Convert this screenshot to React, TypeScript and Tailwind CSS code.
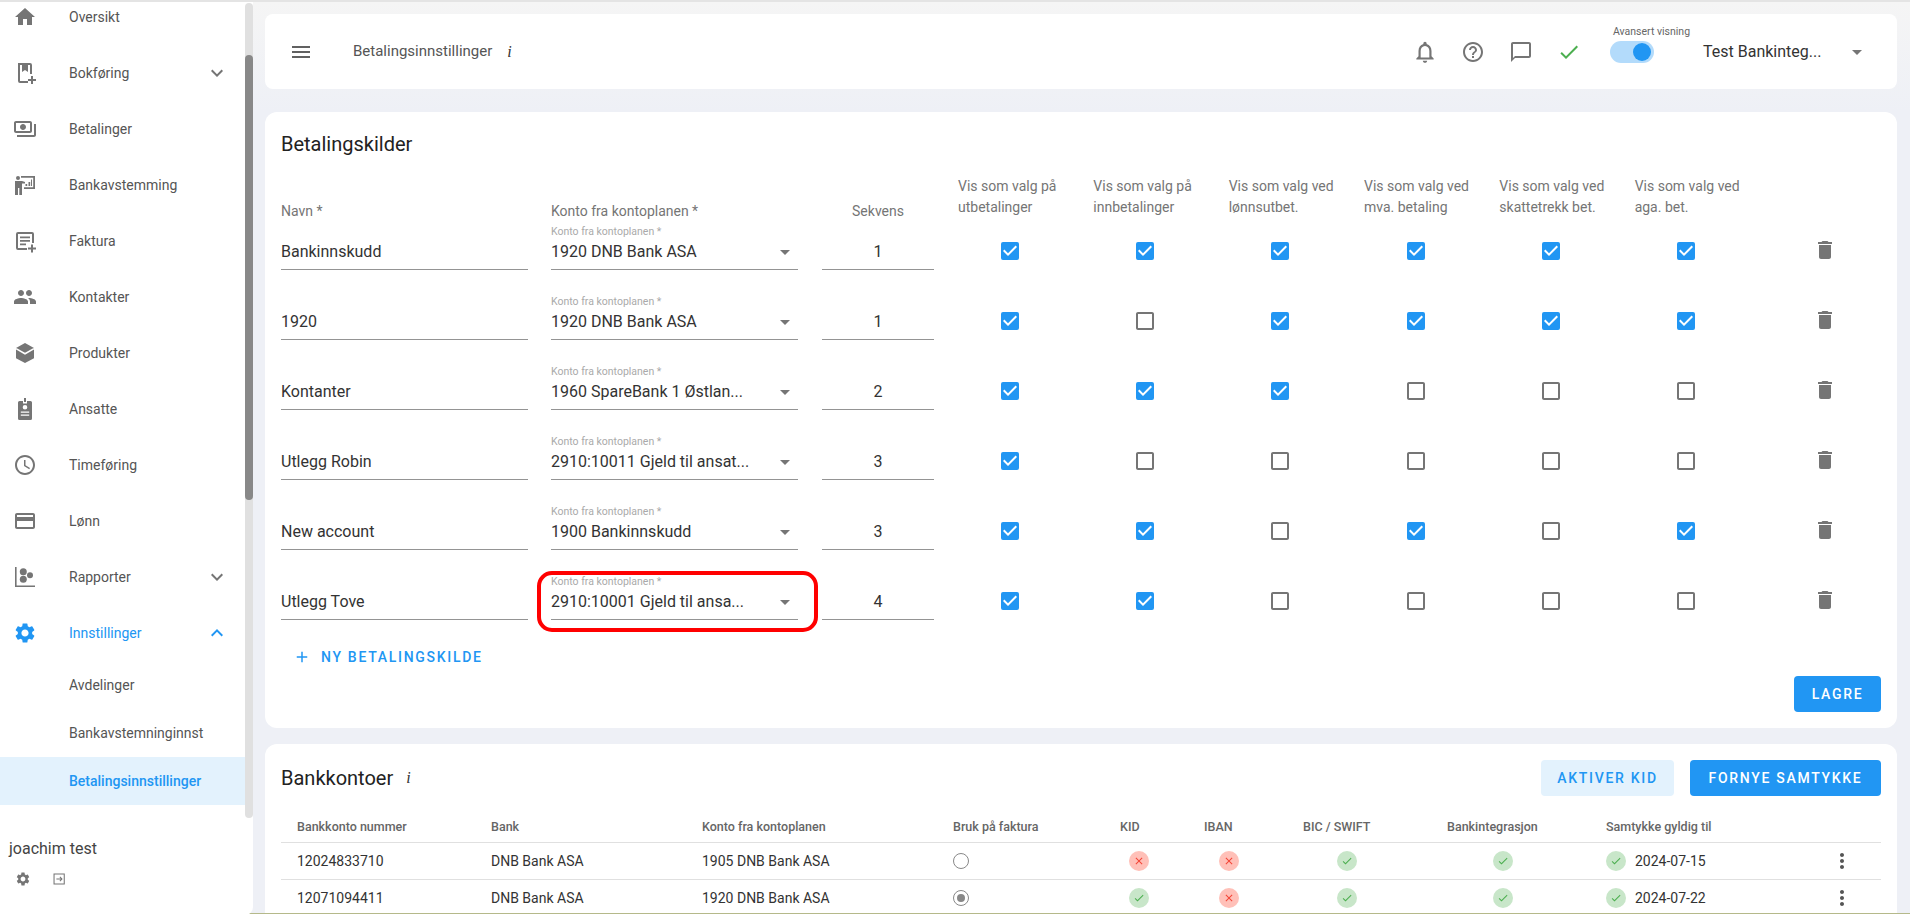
import { MdAdd, MdAccessTime, MdArrowDropDown, MdCheck, MdCheckBox, MdCheckBoxOutlineBlank, MdChatBubbleOutline, MdClose, MdCreditCard, MdDelete, MdExpandLess, MdExpandMore, MdHelpOutline, MdHome, MdMenu, MdMoreVert, MdOutlineNotifications, MdOutlinePayments, MdPeople, MdSettings } from "react-icons/md"
import type { ComponentType, ReactNode } from "react"

const font = "font-['Roboto','Liberation_Sans',sans-serif]"

function BookAddIcon({ className }: { className?: string }) {
  return (
    <svg viewBox="0 0 24 24" className={className} fill="currentColor">
      <path d="M5 2h12a2 2 0 0 1 2 2v9h-2V4h-2v7l-3-2-3 2V4H7v16h8v2H7a2 2 0 0 1-2-2z" />
      <path d="M18 15h2v3h3v2h-3v3h-2v-3h-3v-2h3z" />
    </svg>
  )
}

function InvoiceAddIcon({ className }: { className?: string }) {
  return (
    <svg viewBox="0 0 24 24" className={className} fill="currentColor">
      <path d="M5 3h14a2 2 0 0 1 2 2v9h-2V5H5v14h9v2H5a2 2 0 0 1-2-2V5a2 2 0 0 1 2-2z" />
      <path d="M7 7.500h10v1.800H7zM7 11h10v1.800H7zM7 14.500h6v1.800H7z" />
      <path d="M18 15.500h2v3h3v2h-3v3h-2v-3h-3v-2h3z" />
    </svg>
  )
}

function TrainingIcon({ className }: { className?: string }) {
  return (
    <svg viewBox="0 0 24 24" className={className} fill="currentColor">
      <circle cx="5" cy="5" r="2" />
      <path d="M2 8h7l3 1v1.600H9V22H6.300v-7H5v7H2z" />
      <path d="M8 3h14v13H11v-1.700h9.200V4.700H8z" />
      <path d="M12.500 11h1.700v2h-1.700zM15.500 9h1.700v4h-1.700zM18 6.500h1v6.500h-1z" />
    </svg>
  )
}

function BoxIcon({ className }: { className?: string }) {
  return (
    <svg viewBox="0 0 24 24" className={className}>
      <path fill="currentColor" d="M12 2 3 7v10.200l9 4.800 9-4.800V7z" />
      <path fill="none" stroke="#fff" strokeWidth="1.600" d="M3 7.600 12 12.800 21 7.600" />
    </svg>
  )
}

function BadgeIcon({ className }: { className?: string }) {
  return (
    <svg viewBox="0 0 24 24" className={className} fill="currentColor">
      <path fillRule="evenodd" d="M11 1h2v4h-2zM6.500 4H10v2.500h4V4h3.500A1.500 1.500 0 0 1 19 5.500v16a1.500 1.500 0 0 1-1.500 1.500h-11A1.500 1.500 0 0 1 5 21.500v-16A1.500 1.500 0 0 1 6.500 4zM12 8a2.300 2.300 0 1 0 0 4.600A2.300 2.300 0 0 0 12 8zM7.800 14.500v1.300h8.400v-1.300zM7.800 17.500v1.300h8.400v-1.300z" />
    </svg>
  )
}

function ReportIcon({ className }: { className?: string }) {
  return (
    <svg viewBox="0 0 24 24" className={className} fill="currentColor">
      <path d="M2 2h1.600v18.400H22V22H2z" />
      <circle cx="10.300" cy="6.700" r="3.500" />
      <circle cx="10.300" cy="14.300" r="3.500" />
      <circle cx="17" cy="10.300" r="3" />
    </svg>
  )
}

function LogoutIcon({ className }: { className?: string }) {
  return (
    <svg viewBox="0 0 24 24" className={className} fill="none" stroke="currentColor" strokeWidth="1.800">
      <path d="M21 4.500V3.500H3.500v17H21v-1M21 4.500v15" />
      <path d="M7.500 12h9M13.500 8.500 17 12l-3.500 3.500" />
    </svg>
  )
}

type NavItem = { label: string; icon: ComponentType<{ className?: string }>; chevron?: boolean }

const navItems: NavItem[] = [
  { label: "Oversikt", icon: MdHome },
  { label: "Bokføring", icon: BookAddIcon, chevron: true },
  { label: "Betalinger", icon: MdOutlinePayments },
  { label: "Bankavstemming", icon: TrainingIcon },
  { label: "Faktura", icon: InvoiceAddIcon },
  { label: "Kontakter", icon: MdPeople },
  { label: "Produkter", icon: BoxIcon },
  { label: "Ansatte", icon: BadgeIcon },
  { label: "Timeføring", icon: MdAccessTime },
  { label: "Lønn", icon: MdCreditCard },
  { label: "Rapporter", icon: ReportIcon, chevron: true },
]

const sources = [
  { name: "Bankinnskudd", account: "1920 DNB Bank ASA", seq: 1, flags: [1, 1, 1, 1, 1, 1] },
  { name: "1920", account: "1920 DNB Bank ASA", seq: 1, flags: [1, 0, 1, 1, 1, 1] },
  { name: "Kontanter", account: "1960 SpareBank 1 Østlan...", seq: 2, flags: [1, 1, 1, 0, 0, 0] },
  { name: "Utlegg Robin", account: "2910:10011 Gjeld til ansat...", seq: 3, flags: [1, 0, 0, 0, 0, 0] },
  { name: "New account", account: "1900 Bankinnskudd", seq: 3, flags: [1, 1, 0, 1, 0, 1] },
  { name: "Utlegg Tove", account: "2910:10001 Gjeld til ansa...", seq: 4, flags: [1, 1, 0, 0, 0, 0], marked: true },
]

const flagHeaders = [
  ["Vis som valg på", "utbetalinger"],
  ["Vis som valg på", "innbetalinger"],
  ["Vis som valg ved", "lønnsutbet."],
  ["Vis som valg ved", "mva. betaling"],
  ["Vis som valg ved", "skattetrekk bet."],
  ["Vis som valg ved", "aga. bet."],
]

const accounts = [
  { number: "12024833710", account: "1905 DNB Bank ASA", selected: false, kid: false, date: "2024-07-15" },
  { number: "12071094411", account: "1920 DNB Bank ASA", selected: true, kid: true, date: "2024-07-22" },
]

const sourceCols = "grid grid-cols-[270px_271px_120px_repeat(6,135.33px)_1fr]"
const accountCols = "grid grid-cols-[194px_211px_251px_167px_84px_99px_144px_159px_236px_1fr]"

function Sidebar() {
  return (
    <aside className="flex h-[913px] w-[253px] shrink-0 flex-col overflow-hidden rounded-br-lg bg-white">
      <div className="relative h-[816px] shrink-0 overflow-hidden">
        <div className="-mt-[13px] w-[245px]">
          {navItems.map(({ label, icon: Icon, chevron }) => (
            <div key={label} className="flex h-14 items-center text-sm text-[#555]">
              <Icon className="ml-[13px] size-6 text-[#757575]" />
              <span className="ml-[32px] flex-1">{label}</span>
              {chevron && <MdExpandMore className="mr-4 size-6 text-[#757575]" />}
            </div>
          ))}
          <div className="flex h-14 items-center text-sm text-[#2196f3]">
            <MdSettings className="ml-[13px] size-6" />
            <span className="ml-[32px] flex-1">Innstillinger</span>
            <MdExpandLess className="mr-4 size-6" />
          </div>
          <div className="flex h-12 items-center pl-[69px] text-sm text-[#555]">Avdelinger</div>
          <div className="flex h-12 items-center pl-[69px] text-sm text-[#555]">Bankavstemninginnst</div>
          <div className="flex h-12 items-center bg-[#e3f2fd] pl-[69px] text-sm font-medium text-[#2196f3]">Betalingsinnstillinger</div>
        </div>
        <div className="absolute top-[1px] bottom-0 right-0 w-2 rounded bg-[#e0e0e0]">
          <div className="mt-[52px] h-[445px] rounded bg-[#888]" />
        </div>
      </div>
      <div className="mt-[21px] pl-[9px] text-base leading-5 text-[#444]">joachim test</div>
      <div className="mt-[12px] flex items-center text-[#757575]">
        <MdSettings className="ml-[15px] size-4" />
        <LogoutIcon className="ml-[21px] size-[14px]" />
      </div>
    </aside>
  )
}

function TopBar() {
  return (
    <header className="flex h-[75px] shrink-0 items-center rounded-lg bg-white">
      <MdMenu className="ml-[24px] size-6 text-[#616161]" />
      <span className="ml-[40px] text-[15px] text-[#555]">Betalingsinnstillinger</span>
      <span className="ml-[15px] font-['Liberation_Serif',serif] text-base italic text-[#333]">i</span>
      <div className="ml-auto flex items-center text-[#757575]">
        <MdOutlineNotifications className="size-[26px]" />
        <MdHelpOutline className="ml-[23px] size-6" />
        <MdChatBubbleOutline className="ml-6 size-6" />
        <MdCheck className="ml-6 size-6 text-[#4caf50]" />
        <div className="relative ml-[29px] h-[22px] w-11 rounded-full bg-[#b3dbfb]">
          <span className="absolute -top-[15px] left-[3px] whitespace-nowrap text-[10.5px] leading-3 text-[#666]">Avansert visning</span>
          <span className="absolute right-[3px] top-[2px] size-[18px] rounded-full bg-[#2196f3]" />
        </div>
        <span className="ml-[49px] w-[142px] text-base text-[#333]">Test Bankinteg...</span>
        <MdArrowDropDown className="mr-[28px] size-6" />
      </div>
    </header>
  )
}

function Underlined({ children, className }: { children: ReactNode; className: string }) {
  return <div className={`flex h-[33px] items-start border-b border-[#949494] pt-[5px] text-base leading-[19px] text-[#333] ${className}`}>{children}</div>
}

function PaymentSources() {
  return (
    <section className="relative mt-[23px] h-[616px] shrink-0 rounded-xl bg-white">
      <h2 className="pl-4 pt-[20px] text-xl leading-6 text-[#222]">Betalingskilder</h2>
      <div className={`${sourceCols} mt-[20px] h-[46px] pl-4 text-sm leading-[21px] text-[#757575]`}>
        <div className="flex items-end">Navn *</div>
        <div className="flex items-end">Konto fra kontoplanen *</div>
        <div className="flex w-[112px] items-end justify-center">Sekvens</div>
        {flagHeaders.map(([first, second]) => (
          <div key={second} className="whitespace-nowrap pl-4">
            <div>{first}</div>
            <div>{second}</div>
          </div>
        ))}
      </div>
      <div className="mt-[2px]">
        {sources.map((row) => (
          <div key={row.name} className={`${sourceCols} h-[70px] pl-4`}>
            <div className="pt-[13px]">
              <Underlined className="w-[247px]">{row.name}</Underlined>
            </div>
            <div className="relative pt-[2px]">
              <div className="h-[11px] whitespace-nowrap text-[10.5px] leading-3 text-[#aaa]">Konto fra kontoplanen *</div>
              <Underlined className="w-[247px] justify-between whitespace-nowrap">
                <span>{row.account}</span>
                <MdArrowDropDown className="mr-[1px] size-6 shrink-0 -translate-y-[2px] text-[#757575]" />
              </Underlined>
              {row.marked && <div className="absolute -left-[14px] -top-[3px] h-[61px] w-[281px] rounded-[15px] border-4 border-[#f00]" />}
            </div>
            <div className="pt-[13px]">
              <Underlined className="w-[112px] justify-center">{row.seq}</Underlined>
            </div>
            {row.flags.map((flag, i) => (
              <div key={i} className="flex justify-center pt-[15px]">
                {flag ? <MdCheckBox className="size-6 text-[#2196f3]" /> : <MdCheckBoxOutlineBlank className="size-6 text-[#757575]" />}
              </div>
            ))}
            <div className="flex justify-center pt-[14px]">
              <MdDelete className="size-6 text-[#757575]" />
            </div>
          </div>
        ))}
      </div>
      <button className="-mt-[5px] ml-[28px] flex h-9 items-center text-sm font-medium tracking-[1.7px] text-[#2196f3]">
        <MdAdd className="mr-[10px] size-[18px]" />
        NY BETALINGSKILDE
      </button>
      <button className="absolute bottom-4 right-4 h-9 w-[87px] rounded bg-[#2196f3] text-sm font-medium tracking-[1.7px] text-white">LAGRE</button>
    </section>
  )
}

function StatusDot({ ok, className = "" }: { ok: boolean; className?: string }) {
  return ok ? (
    <span className={`flex size-5 shrink-0 items-center justify-center rounded-full bg-[#c8e6c9] ${className}`}>
      <MdCheck className="size-3 text-[#4caf50]" />
    </span>
  ) : (
    <span className={`flex size-5 shrink-0 items-center justify-center rounded-full bg-[#ffc0b8] ${className}`}>
      <MdClose className="size-3 text-[#f44336]" />
    </span>
  )
}

function BankAccounts() {
  return (
    <section className="mt-4 min-h-0 flex-1 overflow-hidden rounded-t-xl bg-white">
      <div className="flex items-start justify-between pl-4 pr-4 pt-4">
        <div className="flex items-center pt-[6px]">
          <h2 className="text-xl leading-6 text-[#222]">Bankkontoer</h2>
          <span className="ml-[13px] font-['Liberation_Serif',serif] text-base italic text-[#333]">i</span>
        </div>
        <div className="flex gap-4">
          <button className="h-9 w-[133px] rounded bg-[#e3f2fd] text-sm font-medium tracking-[1.7px] text-[#2196f3]">AKTIVER KID</button>
          <button className="h-9 w-[191px] rounded bg-[#2196f3] text-sm font-medium tracking-[1.7px] text-white">FORNYE SAMTYKKE</button>
        </div>
      </div>
      <div className="mx-4 mt-[23px]">
        <div className={`${accountCols} h-[24px] items-start border-b border-[#e0e0e0] text-[12.5px] font-medium leading-4 text-[#666]`}>
          {["Bankkonto nummer", "Bank", "Konto fra kontoplanen", "Bruk på faktura", "KID", "IBAN", "BIC / SWIFT", "Bankintegrasjon", "Samtykke gyldig til"].map((h) => (
            <div key={h} className="whitespace-nowrap pl-4">{h}</div>
          ))}
        </div>
        {accounts.map((row) => (
          <div key={row.number} className={`${accountCols} h-[37px] items-center border-b border-[#e0e0e0] text-sm text-[#333]`}>
            <div className="pl-4">{row.number}</div>
            <div className="pl-4">DNB Bank ASA</div>
            <div className="pl-4">{row.account}</div>
            <div className="pl-4">
              <span className="flex size-4 items-center justify-center rounded-full border border-[#888]">
                {row.selected && <span className="size-2 rounded-full bg-[#888]" />}
              </span>
            </div>
            <div><StatusDot ok={row.kid} className="ml-[25px]" /></div>
            <div><StatusDot ok={false} className="ml-[31px]" /></div>
            <div><StatusDot ok className="ml-[50px]" /></div>
            <div><StatusDot ok className="ml-[62px]" /></div>
            <div className="flex items-center">
              <StatusDot ok className="ml-[16px]" />
              <span className="ml-[9px]">{row.date}</span>
            </div>
            <div><MdMoreVert className="ml-[4px] size-6 text-[#555]" /></div>
          </div>
        ))}
      </div>
    </section>
  )
}

export default function App() {
  return (
    <div className={`${font} flex h-[914px] w-[1910px] flex-col overflow-hidden bg-[#eef0f6]`}>
      <div className="flex min-h-0 flex-1 border-t-2 border-[#e4e4e4] border-b border-b-[#b5b98a]">
        <Sidebar />
        <main className="flex min-w-0 flex-1 flex-col bg-[linear-gradient(#f5f5f5,#eef0f6_110px)] pl-3 pr-[13px] pt-3">
          <TopBar />
          <PaymentSources />
          <BankAccounts />
        </main>
      </div>
    </div>
  )
}
